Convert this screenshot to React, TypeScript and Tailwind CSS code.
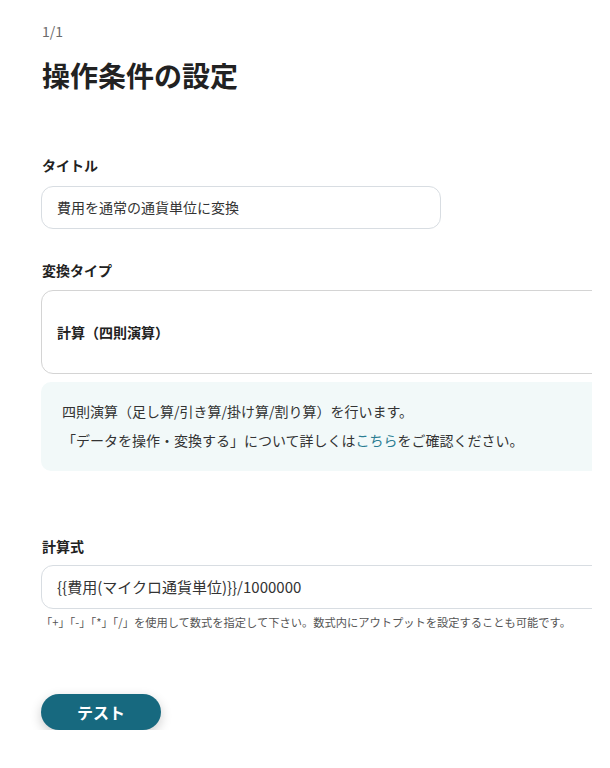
export default function App() {
  return (
    <div className="min-h-[768px] w-[610px] bg-white" style={{ fontFamily: '"Noto Sans CJK JP", "Noto Sans", sans-serif' }}>
      <div className="w-[592px] overflow-hidden pl-[41px] pt-[20px]">
        <div className="pl-px text-[14px] leading-[22px] text-[#6b6b6b]">1/1</div>
        <h1 className="mt-[16px] pl-px text-[28px] font-bold leading-[34px] text-[#222]">操作条件の設定</h1>

        <div className="mt-[63px] pl-px text-[14px] font-bold leading-[20px] text-[#222]">タイトル</div>
        <div className="mt-[11px] flex h-[43px] w-[400px] items-center rounded-[12px] border border-[#d8dde2] px-[15px] text-[14px] text-[#333]">
          費用を通常の通貨単位に変換
        </div>

        <div className="mt-[31px] pl-px text-[14px] font-bold leading-[20px] text-[#222]">変換タイプ</div>
        <div className="mt-[10px] flex h-[84px] w-[600px] items-center rounded-[12px] border border-[#d4d4d4] px-[15px] text-[14px] font-bold text-[#222]">
          計算（四則演算）
        </div>

        <div className="mt-[8px] w-[600px] rounded-[10px] bg-[#f2f9f9] px-[21px] pb-[16px] pt-[15px] text-[14px] leading-[29px] text-[#333]">
          <p>四則演算（足し算/引き算/掛け算/割り算）を行います。</p>
          <p>
            「データを操作・変換する」について詳しくは<span className="text-[#2b7d93]">こちら</span>をご確認ください。
          </p>
        </div>

        <div className="mt-[65px] pl-px text-[14px] font-bold leading-[20px] text-[#222]">計算式</div>
        <div className="mt-[9px] flex h-[44px] w-[600px] items-center rounded-[12px] border border-[#d8dde2] px-[15px] text-[15px] text-[#333]">
          {"{{費用(マイクロ通貨単位)}}/1000000"}
        </div>
        <p className="mt-[5px] whitespace-nowrap text-[11.25px] leading-[16px] text-[#555]">
          「+」「-」「*」「/」を使用して数式を指定して下さい。数式内にアウトプットを設定することも可能です。
        </p>

        <button className="mt-[64px] h-[36px] w-[120px] rounded-full bg-[#17697f] text-[16px] font-bold text-white shadow-[0_4px_12px_rgba(0,0,0,0.2)]">
          テスト
        </button>
      </div>
    </div>
  );
}
